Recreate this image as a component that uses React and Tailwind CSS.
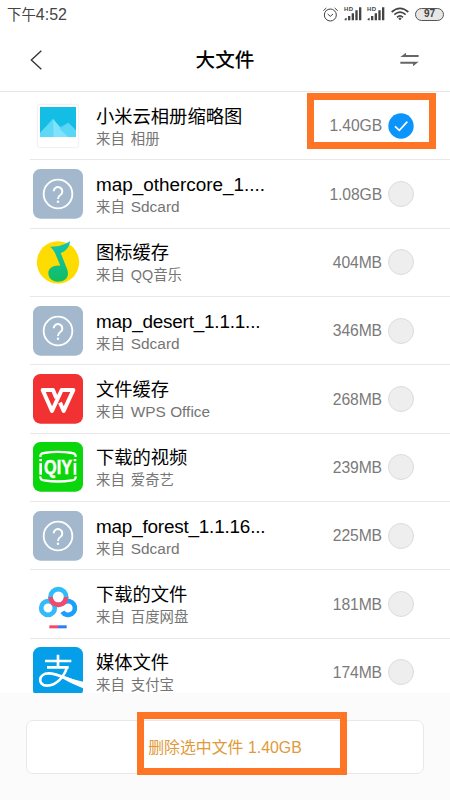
import React from 'react';

// Shared wrapper, every app icon is drawn on a 150x150 grid
function IconSvg({ children }) {
    return (
        <svg viewBox="0 0 150 150" className="w-[50px] h-[50px] block shrink-0 overflow-visible">
            {children}
        </svg>
    );
}

function GalleryIcon() {
    return (
        <IconSvg>
            <rect x="13" y="10" width="124" height="130" rx="7" fill="#fff" stroke="#ececec" strokeWidth="2.5" />
            <rect x="21" y="18" width="108" height="90" fill="#14bde4" />
            <path d="M21 96L60 54L80 78L106 65L129 90V108H21Z" fill="#45cdf2" />
            <path d="M21 96L60 54L106 108H21Z" fill="#5fd8f6" />
            <path d="M60 54L106 108H62Z" fill="#7fe3fb" />
            <path d="M80 84L106 65L129 88V108H106Z" fill="#59d5f6" />
        </IconSvg>
    );
}

function UnknownIcon() {
    return (
        <IconSvg>
            <rect width="150" height="149" rx="22" fill="#a3b8cc" />
            <circle cx="75" cy="75" r="43" fill="none" stroke="#fff" strokeWidth="5.5" />
            <path d="M62 67a13 13 0 1 1 20 11c-5 3-7 5-7 12" fill="none" stroke="#fff" strokeWidth="6" />
            <circle cx="75" cy="98" r="3.8" fill="#fff" />
        </IconSvg>
    );
}

function QQMusicIcon() {
    return (
        <IconSvg>
            <defs>
                <linearGradient id="qq" x1="0" y1="0" x2="0" y2="1">
                    <stop offset="0" stopColor="#12c4b4" />
                    <stop offset="1" stopColor="#12bd62" />
                </linearGradient>
            </defs>
            <circle cx="75" cy="76" r="63.5" fill="#ffdc00" />
            <path d="M51 29C72 30 94 25 111 12C110 30 99 42 83 48L103 98C111 124 92 134 75 134C58 134 46 123 46 109C46 94 60 84 82 86L66 48C62 40 57 34 51 29Z" fill="url(#qq)" />
        </IconSvg>
    );
}

function WpsIcon() {
    return (
        <IconSvg>
            <rect width="150" height="149" rx="22" fill="#f23232" />
            <path d="M70 72L60 48H29L57 111L86 48H121L92 111L81 86" fill="none" stroke="#fff" strokeWidth="12" strokeLinejoin="round" />
        </IconSvg>
    );
}

function IqiyiIcon() {
    return (
        <IconSvg>
            <rect width="150" height="149" rx="22" fill="#0bd60b" />
            <path d="M22 45Q21 34 33 33Q75 26 117 33Q129 34 128 45M22 103Q21 114 33 115Q75 122 117 115Q129 114 128 103" fill="none" stroke="#fff" strokeWidth="7" />
            <text x="33" y="97" textLength="84" lengthAdjust="spacingAndGlyphs" fill="#fff" stroke="#fff" strokeWidth="1.5" className="text-[62px] font-bold font-['Liberation_Sans',sans-serif]">QIY</text>
            <path d="M19 51H27V58H19ZM19 63H27V98H19ZM122 51H130V58H122ZM122 63H130V98H122Z" fill="#fff" />
        </IconSvg>
    );
}

function BaiduIcon() {
    return (
        <IconSvg>
            <circle cx="45" cy="87" r="20.5" fill="none" stroke="#34b9fb" strokeWidth="14" />
            <path d="M88 98A20.5 20.5 0 1 0 94 70" fill="none" stroke="#1c9ffc" strokeWidth="14" />
            <circle cx="76" cy="54" r="23.5" fill="none" stroke="#2cbdfa" strokeWidth="14" />
            <path d="M52.5 54A23.5 23.5 0 0 0 99.5 54" fill="none" stroke="#f5486a" strokeWidth="14" />
            <rect x="49" y="139" width="26" height="9" fill="#f5486a" />
            <rect x="75" y="139" width="26" height="9" fill="#2f7df0" />
        </IconSvg>
    );
}

function AlipayIcon() {
    return (
        <IconSvg>
            <rect width="150" height="150" rx="22" fill="#049fe8" />
            <path d="M36 42H115M42 61H107M75 23V61" fill="none" stroke="#fff" strokeWidth="8" />
            <path d="M102 60C95 88 70 116 42 116C13 116 15 79 47 79C75 79 104 98 150 112" fill="none" stroke="#fff" strokeWidth="8" />
            <path d="M90 87Q120 98 150 104V124Q115 110 84 92Z" fill="#fff" />
        </IconSvg>
    );
}

const cjkTitle = 'text-[18.3px]';
const files = [
    { name: '小米云相册缩略图', from: '相册', size: '1.40GB', Icon: GalleryIcon, title: cjkTitle, checked: true },
    { name: 'map_othercore_1....', from: 'Sdcard', size: '1.08GB', Icon: UnknownIcon, title: 'text-[18.9px]', latin: true },
    { name: '图标缓存', from: 'QQ音乐', size: '404MB', Icon: QQMusicIcon, title: cjkTitle },
    { name: 'map_desert_1.1.1...', from: 'Sdcard', size: '346MB', Icon: UnknownIcon, title: 'text-[18.9px] tracking-[-0.2px]', latin: true },
    { name: '文件缓存', from: 'WPS Office', size: '268MB', Icon: WpsIcon, title: cjkTitle, latin: true },
    { name: '下载的视频', from: '爱奇艺', size: '239MB', Icon: IqiyiIcon, title: cjkTitle },
    { name: 'map_forest_1.1.16...', from: 'Sdcard', size: '225MB', Icon: UnknownIcon, title: 'text-[18.9px] tracking-[-0.2px]', latin: true },
    { name: '下载的文件', from: '百度网盘', size: '181MB', Icon: BaiduIcon, title: cjkTitle },
    { name: '媒体文件', from: '支付宝', size: '174MB', Icon: AlipayIcon, title: cjkTitle },
];

function Signal() {
    return (
        <svg viewBox="0 0 54 42" className="w-[18px] h-[14px] overflow-visible">
            <text x="0" y="13" textLength="27" fill="#444" className="text-[18px] font-bold font-['Liberation_Sans',sans-serif]">HD</text>
            <path d="M2 40V35L8 32V40ZM12 40V27H19V40ZM23 40V19H30V40ZM34 40V10H41V40ZM45 40V1H52V40Z" fill="#444" />
        </svg>
    );
}

function StatusBar() {
    return (
        <div className="h-[28px] flex items-center justify-between pl-[7px] pr-[6px] text-[#444]">
            <span className="text-[14.4px] leading-[28px] pt-[2px]">
                下午<span className="text-[16px]">4:52</span>
            </span>
            <div className="flex items-center">
                <svg viewBox="0 0 45 45" className="w-[15px] h-[15px] mr-[6px]" fill="none" stroke="#444" strokeWidth="3">
                    <circle cx="22" cy="24" r="18" />
                    <path d="M14 21L22 28L30 21M1 11L10 3M35 3L44 11" />
                </svg>
                <div className="mr-[5px]"><Signal /></div>
                <div className="mr-[6px]"><Signal /></div>
                <svg viewBox="0 0 54 42" className="w-[18px] h-[14px] mr-[6px]" fill="none" stroke="#444" strokeWidth="5">
                    <path d="M2 15Q27 -7 52 15M10 23Q27 8 44 23M18 31Q27 22 36 31" />
                    <path d="M22 35L27 31L32 35L27 40Z" fill="#444" stroke="none" />
                </svg>
                <div className="w-[29px] h-[13px] rounded-full border border-[#555] bg-[#e6e6e6] flex items-center justify-center text-[10px] leading-none font-bold">97</div>
            </div>
        </div>
    );
}

function Header() {
    return (
        <div className="h-[64px] border-b border-[#e6e6e6] flex items-center justify-between pl-[30px] pr-[31px]">
            <svg viewBox="0 0 36 60" className="w-[12px] h-[20px]" fill="none" stroke="#333" strokeWidth="4">
                <path d="M34 2L4 30L34 58" />
            </svg>
            <h1 className="text-[19.6px] font-medium text-black pl-[8px] pt-[3px]">大文件</h1>
            <svg viewBox="0 0 57 48" className="w-[19px] h-[16px]" fill="#666">
                <path d="M1 15L18 2V9H56V15ZM56 29L39 43V35H1V29Z" />
            </svg>
        </div>
    );
}

function FileRow({ name, from, size, Icon, title, checked, latin }) {
    return (
        <div className="ml-[30px] pl-[3px] pr-[36px] h-[68.35px] border-b border-[#e8e8e8] flex items-center">
            <Icon />
            <div className="ml-[13px] flex-1 min-w-0 whitespace-nowrap pt-[3px] text-black">
                <div className="h-[24px] leading-[24px]">
                    <span className={title}>{name}</span>
                </div>
                <div className="text-[14.4px] leading-[21px] text-[#757575] flex gap-[6px]">
                    <span>来自</span>
                    <span className={latin ? 'text-[15.4px] leading-[19px]' : ''}>{from}</span>
                </div>
            </div>
            <span className="text-[15.7px] text-[#7a7a7a] mr-[6px] pt-px tracking-[-0.1px]">{size}</span>
            {checked ? (
                <svg viewBox="0 0 78 78" className="w-[26px] h-[26px]">
                    <circle cx="39" cy="39" r="38" fill="#0a94fc" />
                    <path d="M21 40L34 52L58 26" fill="none" stroke="#fff" strokeWidth="5" />
                </svg>
            ) : (
                <div className="w-[26px] h-[26px] rounded-full bg-[#eee] border border-[#dcdcdc]" />
            )}
        </div>
    );
}

export default function App() {
    return (
        <div className="relative w-[450px] h-[800px] overflow-hidden bg-white flex flex-col font-['Liberation_Sans','Noto_Sans_CJK_SC',sans-serif]">
            <StatusBar />
            <Header />
            <div className="h-[601px] overflow-hidden">
                {files.map((file) => (
                    <FileRow key={file.name} {...file} />
                ))}
            </div>
            <div className="flex-1 bg-[#fbfbfb] px-[26px] pt-[27px]">
                <button className="w-full h-[54px] rounded-[7px] border border-[#e8e8e8] bg-white text-[#e09a3a] text-[15.9px] pt-px">
                    删除选中文件 1.40GB
                </button>
            </div>

            {/* Highlight frames */}
            <div className="absolute left-[307px] top-[93px] w-[129px] h-[56px] border-[7px] border-[#ff7526]" />
            <div className="absolute left-[137px] top-[712px] w-[210px] h-[63px] border-[7px] border-[#ff7526]" />
        </div>
    );
}
